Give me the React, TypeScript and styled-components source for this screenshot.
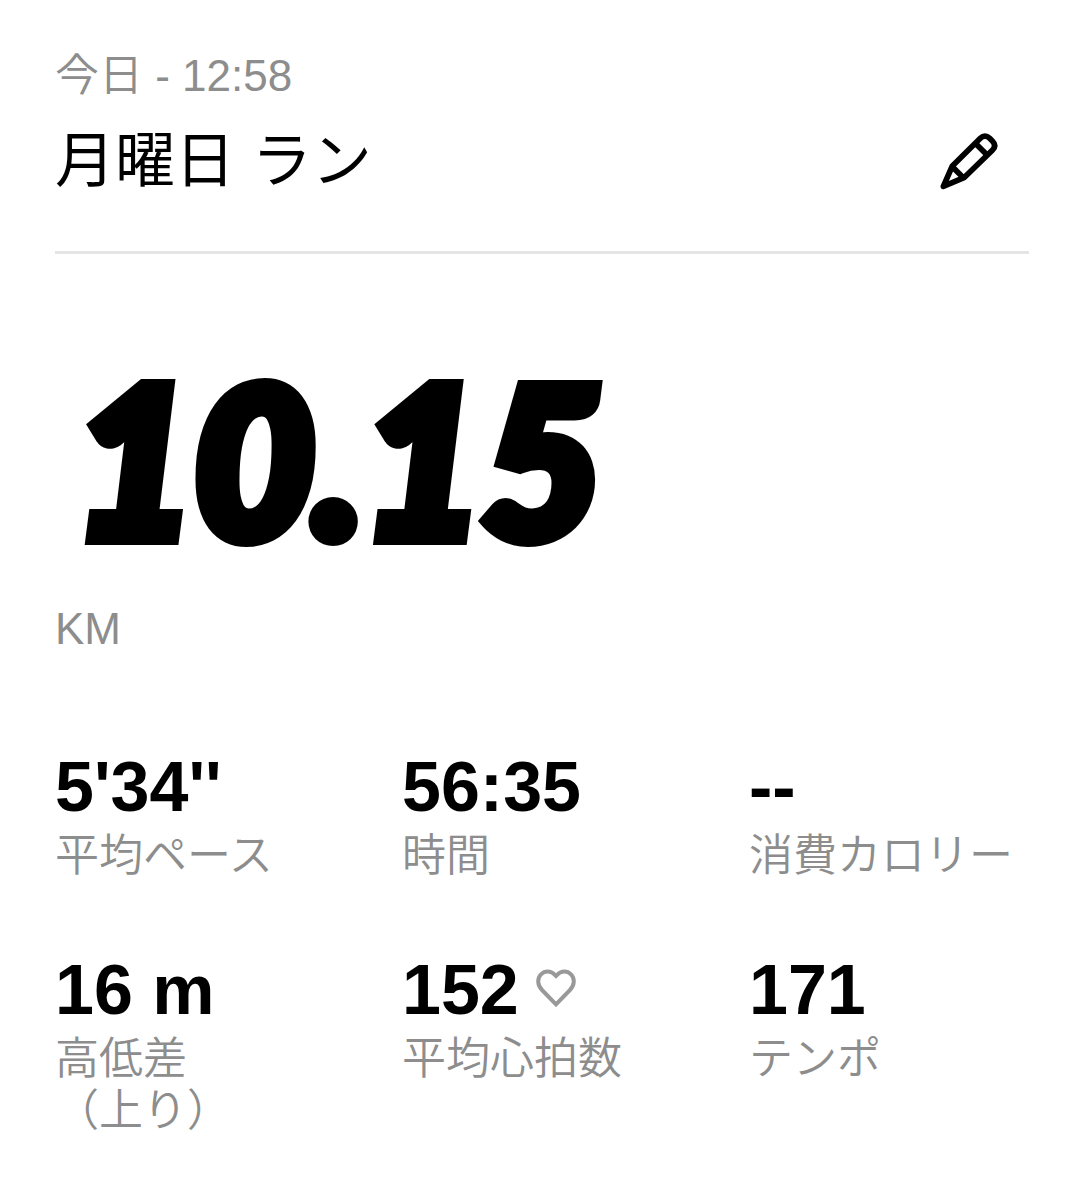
import React from "react";
import styled, { createGlobalStyle } from "styled-components";

const stats = [
  { label: "平均ペース", value: "5'34''" },
  { label: "時間", value: "56:35" },
  { label: "消費カロリー", value: "--" },
  { label: "高低差（上り）", value: "16 m" },
  { label: "平均心拍数", value: "152", heart: true },
  { label: "テンポ", value: "171" },
];

const PencilIcon = () => (
  <svg width="60" height="60" viewBox="60 30 180 180" fill="none" aria-hidden="true">
    <path
      d="M70 199 L97 138 L181 55 Q195 41 209 55 L217 63 Q231 77 217 91 L132 173 Z M166 70 L202 106 M97 140 L130 173"
      stroke="#000"
      strokeWidth="17"
      strokeLinejoin="round"
    />
  </svg>
);

const HeartIcon = () => (
  <svg width="40" height="38" viewBox="50 56 120 114" fill="none" aria-hidden="true">
    <path
      d="M110 162 L68 119 C54 105 53 84 65 72 C77 60 94 61 105 72 L110 77 L115 72 C126 61 143 60 155 72 C167 84 166 105 152 119 Z"
      stroke="#999"
      strokeWidth="12"
    />
  </svg>
);

const App = () => {
  return (
    <>
      <GlobalStyle />
      <Page>
        <Header>
          <div>
            <Caption>今日 - 12:58</Caption>
            <Title>月曜日 ラン</Title>
          </div>
          <EditButton type="button" aria-label="編集">
            <PencilIcon />
          </EditButton>
        </Header>
        <Distance>10.15</Distance>
        <Caption>KM</Caption>
        <Stats>
          {stats.map((stat) => (
            <Stat key={stat.label}>
              <Label>{stat.label}</Label>
              <Value>
                {stat.value}
                {stat.heart && <HeartIcon />}
              </Value>
            </Stat>
          ))}
        </Stats>
      </Page>
    </>
  );
};

export default App;

const GlobalStyle = createGlobalStyle`
  * {
    box-sizing: border-box;
  }
  body {
    margin: 0;
    background: #fff;
    color: #000;
    font-family: "Liberation Sans", "Noto Sans CJK JP", sans-serif;
  }
`;

const Page = styled.main`
  padding: 50px 55px;
`;

const Header = styled.header`
  display: flex;
  justify-content: space-between;
  align-items: flex-end;
  padding-bottom: 53px;
  border-bottom: 3px solid #e5e5e5;
`;

const Caption = styled.p`
  margin: 0;
  font-size: 44px;
  line-height: 52px;
  color: #8d8d8d;
  font-weight: 350;
`;

const Title = styled.h1`
  margin: 24px 0 0;
  font-size: 60px;
  line-height: 72px;
  font-weight: 400;
`;

const EditButton = styled.button`
  display: flex;
  margin: 0 29px 8px 0;
  padding: 0;
  border: 0;
  background: none;
  cursor: pointer;
`;

const Distance = styled.p`
  margin: 94px 0 35px;
  padding-left: 20px;
  font-family: Lato, sans-serif;
  font-size: 206px;
  line-height: 220px;
  font-weight: 900;
  font-style: italic;
  -webkit-text-stroke: 16px #000;
`;

const Stats = styled.dl`
  display: grid;
  grid-template-columns: repeat(3, 1fr);
  align-items: start;
  gap: 68px 67px;
  margin: 92px 0 0;
`;

/* the label comes first in the markup but is shown under its value */
const Stat = styled.div`
  display: flex;
  flex-direction: column-reverse;
  gap: 3px;
`;

const Label = styled.dt`
  font-size: 44px;
  line-height: 52px;
  color: #8d8d8d;
  font-weight: 350;
  word-break: keep-all;
`;

const Value = styled.dd`
  display: flex;
  align-items: center;
  gap: 17px;
  margin: 0;
  font-size: 70px;
  line-height: 80px;
  font-weight: 700;

  svg {
    margin-bottom: 4px;
  }
`;
